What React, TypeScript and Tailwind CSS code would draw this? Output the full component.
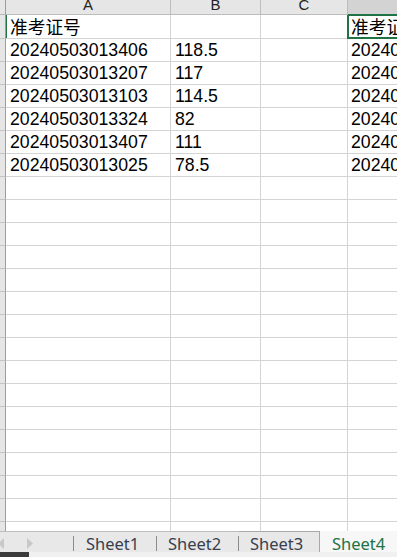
import React from "react";

const rows: [string, string, string, string][] = [
  ["准考证号", "", "", "准考证号"],
  ["20240503013406", "118.5", "", "20240503013406"],
  ["20240503013207", "117", "", "20240503013207"],
  ["20240503013103", "114.5", "", "20240503013103"],
  ["20240503013324", "82", "", "20240503013324"],
  ["20240503013407", "111", "", "20240503013407"],
  ["20240503013025", "78.5", "", "20240503013025"],
];

const totalRows = 23;

function GridRow({ cells, index }: { cells: [string, string, string, string]; index: number }) {
  const first = index === 0;
  const lh = first ? "leading-[27px]" : "leading-[23px]";
  return (
    <div className={`flex shrink-0 ${first ? "h-[24px]" : "h-[23px]"}`}>
      <div className="w-[6px] shrink-0 bg-[#e6e6e6] border-r border-r-[#9c9c9c] border-b border-b-[#c4c4c4]" />
      <div
        className={`w-[165px] shrink-0 border-r border-b border-[#d4d4d4] pl-[4px] overflow-hidden whitespace-nowrap ${lh} ${
          first ? "shadow-[inset_1px_0_0_#217346]" : ""
        }`}
      >
        {cells[0]}
      </div>
      <div className={`w-[90px] shrink-0 border-r border-b border-[#d4d4d4] pl-[4px] overflow-hidden whitespace-nowrap ${lh}`}>
        {cells[1]}
      </div>
      <div className={`w-[87px] shrink-0 border-r border-b border-[#d4d4d4] pl-[4px] overflow-hidden whitespace-nowrap ${lh}`}>
        {cells[2]}
      </div>
      <div className={`relative flex-1 min-w-0 border-b border-[#d4d4d4] pl-[3px] whitespace-nowrap ${lh}`}>
        {cells[3]}
        {first && (
          <div className="absolute -left-[1px] -top-[1px] -bottom-[1px] -right-[10px] border-2 border-[#217346]" />
        )}
      </div>
    </div>
  );
}

export default function App() {
  const allRows: [string, string, string, string][] = [];
  for (let i = 0; i < totalRows; i++) {
    allRows.push(rows[i] ?? ["", "", "", ""]);
  }
  return (
    <div className="w-[397px] h-[557px] overflow-hidden bg-white flex flex-col font-['Liberation_Sans','Noto_Sans_CJK_SC',sans-serif] text-[17.7px] text-black">
      {/* Column header */}
      <div className="flex h-[15px] shrink-0 text-[15px] text-[#222] leading-[9px]">
        <div className="w-[6px] shrink-0 bg-[#e6e6e6] border-r border-r-[#9c9c9c] border-b border-b-[#b8b8b8]" />
        <div className="w-[165px] shrink-0 bg-[#e6e6e6] border-r border-b border-[#bdbdbd] flex justify-center items-start">
          A
        </div>
        <div className="w-[90px] shrink-0 bg-[#e6e6e6] border-r border-b border-[#bdbdbd] flex justify-center items-start">
          B
        </div>
        <div className="w-[87px] shrink-0 bg-[#e6e6e6] border-r border-b border-[#bdbdbd] flex justify-center items-start">
          C
        </div>
        <div className="flex-1 bg-[#d3d3d3] border-b border-[#217346]" />
      </div>

      {/* Grid */}
      <div className="flex-1 min-h-0 overflow-hidden flex flex-col">
        {allRows.map((r, i) => (
          <GridRow key={i} cells={r} index={i} />
        ))}
      </div>

      {/* Sheet tabs */}
      <div className="flex h-[21px] shrink-0 bg-[#e8e8e8] font-['Noto_Sans',sans-serif] text-[16.5px] leading-[18px] text-[#38404e]">
        <div className="w-[73px] shrink-0 border-t border-[#bdbdbd]">
          <svg width="73" height="20" viewBox="0 0 73 20" className="block">
            <polygon points="4,6 -2,11.5 4,17" fill="#c8c8c8" />
            <polygon points="27,6 33,11.5 27,17" fill="#c8c8c8" />
          </svg>
        </div>
        <div className="w-px shrink-0 border-t border-[#bdbdbd] flex items-end pb-[1px]">
          <div className="w-px h-[15px] bg-[#8c8c8c]" />
        </div>
        <div className="w-[82px] shrink-0 border-t border-[#bdbdbd] pl-[12px] pt-[3px]">Sheet1</div>
        <div className="w-px shrink-0 border-t border-[#bdbdbd] flex items-end pb-[1px]">
          <div className="w-px h-[15px] bg-[#8c8c8c]" />
        </div>
        <div className="w-[81px] shrink-0 border-t border-[#bdbdbd] pl-[11px] pt-[3px]">Sheet2</div>
        <div className="w-px shrink-0 border-t border-[#bdbdbd] flex items-end pb-[1px]">
          <div className="w-px h-[15px] bg-[#8c8c8c]" />
        </div>
        <div className="w-[81px] shrink-0 border-t border-r border-[#a8a8a8] pl-[11px] pt-[3px]">Sheet3</div>
        <div className="flex-1 bg-[#f7f7f7] pl-[12px] pt-[4px] text-[#217346] whitespace-nowrap">Sheet4</div>
      </div>
      <div className="flex h-[5px] shrink-0 bg-[#f0f0f0]">
        <div className="w-[29px] bg-[#3a3a3a]" />
      </div>
    </div>
  );
}
